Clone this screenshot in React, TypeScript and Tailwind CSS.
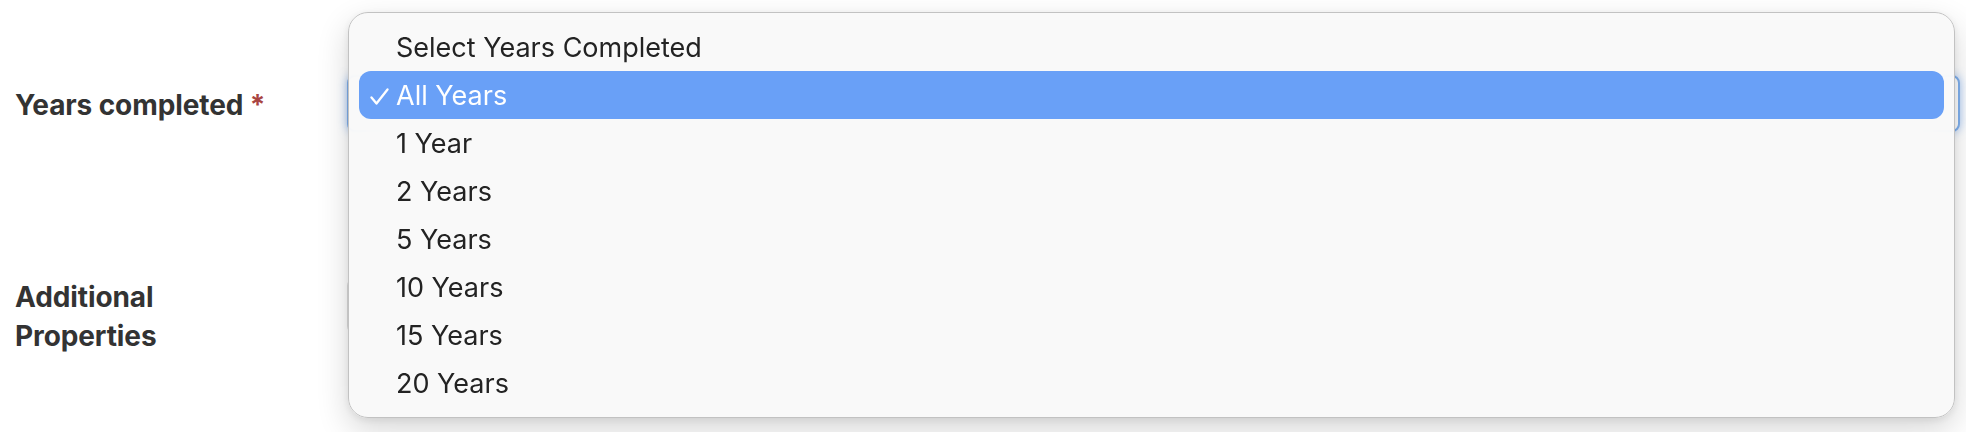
import React from 'react'

const OPTIONS = ['All Years', '1 Year', '2 Years', '5 Years', '10 Years', '15 Years', '20 Years']

function Check() {
  return (
    <svg width="19" height="17" viewBox="0 0 19 17" fill="none" className="block">
      <path d="M1.5 9.5 L6.5 15.5 L17.5 1.5" stroke="white" strokeWidth="2.3" strokeLinecap="round" strokeLinejoin="round" />
    </svg>
  )
}

function OptionRow({ label, selected }: { label: string; selected: boolean }) {
  return (
    <div
      className={
        'mx-[10px] flex h-[48px] items-center rounded-[12px] pl-[11px] pt-[3px] ' +
        (selected ? 'bg-[#69a0f7] text-white' : 'text-[#232323]')
      }
    >
      <span className="flex w-[26px] items-center">{selected ? <Check /> : null}</span>
      <span>{label}</span>
    </div>
  )
}

export default function App() {
  return (
    <div className="relative h-[432px] w-[1966px] overflow-hidden bg-white font-['Inter',sans-serif]">
      {/* form underneath */}
      <div className="flex flex-col pl-[15px]">
        <div className="mt-[75px] grid h-[57px] grid-cols-[332px_1fr] items-center">
          <label className="pt-[3px] text-[28px] font-bold tracking-[-0.1px] text-[#333]">
            Years completed <span className="text-[#a94442]">*</span>
          </label>
          <div className="mr-[6px] h-[57px] rounded-[8px] border-2 border-[#7fb0ee] bg-white shadow-[0_0_10px_rgba(102,160,240,0.6)]" />
        </div>

        <div className="mt-[146px] grid grid-cols-[332px_1fr] items-start">
          <label className="text-[28px] font-bold leading-[39px] tracking-[-0.1px] text-[#333]">
            Additional
            <br />
            Properties
          </label>
          <div className="mr-[40px] h-[56px] rounded-[8px] border-2 border-[#dcdcdc] bg-white" />
        </div>
      </div>

      {/* open select menu */}
      <div className="absolute left-[348px] top-[12px] w-[1607px] rounded-[20px] border border-[#c2c2c2] bg-[#f9f9f9]/95 py-[10px] text-[27px] shadow-[0_12px_32px_rgba(0,0,0,0.16),0_2px_8px_rgba(0,0,0,0.08)] backdrop-blur-xl">
        <div className="flex h-[48px] items-center pl-[47px] pt-[3px] text-[#232323]">Select Years Completed</div>
        {OPTIONS.map((o, i) => (
          <OptionRow key={o} label={o} selected={i === 0} />
        ))}
      </div>
    </div>
  )
}
